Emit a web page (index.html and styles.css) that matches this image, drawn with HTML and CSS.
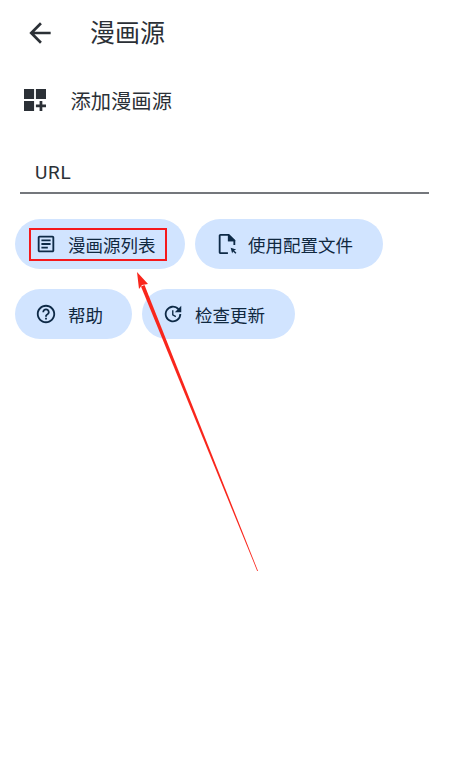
FILE: index.html
```html
<!DOCTYPE html>
<html>
<head>
	<meta charset="utf-8">
	<title>漫画源</title>
	<link rel="stylesheet" href="styles.css">
</head>
<body>
<div class="page">
	<div class="appbar">
		<svg class="back" viewBox="0 0 24 24"><path d="M20 11H7.830l5.590-5.590L12 4l-8 8 8 8 1.410-1.410L7.830 13H20z"/></svg>
		<h1>漫画源</h1>
	</div>
	<div class="add">
		<svg class="add-icon" viewBox="0 0 24 24"><path d="M0 0h11v11H0zM13 0h11v11H13zM0 13h11v11H0zM17 13h3v4h4v3h-4v4h-3v-4h-4v-3h4z"/></svg>
		<span>添加漫画源</span>
	</div>
	<div class="field">URL</div>
	<div class="chips">
		<div class="chip chip-list">
			<svg viewBox="0 0 24 24"><path d="M19 5v14H5V5h14m0-2H5c-1.100 0-2 .9-2 2v14c0 1.100.9 2 2 2h14c1.100 0 2-.9 2-2V5c0-1.100-.9-2-2-2zM7 7h10v2H7zm0 4h10v2H7zm0 4h7v2H7z"/></svg>
			<span>漫画源列表</span>
			<div class="mark"></div>
		</div>
		<div class="chip chip-file">
			<svg viewBox="0 0 24 24">
				<path d="M14 1H5C3.900 1 3 1.900 3 3v18c0 1.100.9 2 2 2h8v-2H5V3h8v6h6v4h2V8z"/>
				<path d="M13 1h1l7 7v1h-8z"/>
				<path d="M16 16l6 2-2.300 1 2.600 2.600-1.100 1.100-2.600-2.600-1 2.300z"/>
			</svg>
			<span>使用配置文件</span>
		</div>
		<div class="chip chip-help">
			<svg viewBox="0 0 24 24"><path d="M11 18h2v-2h-2v2zm1-16C6.480 2 2 6.480 2 12s4.480 10 10 10 10-4.480 10-10S17.520 2 12 2zm0 18c-4.410 0-8-3.590-8-8s3.590-8 8-8 8 3.590 8 8-3.590 8-8 8zm0-14c-2.210 0-4 1.790-4 4h2c0-1.100.9-2 2-2s2 .9 2 2c0 2-3 1.750-3 5h2c0-2.250 3-2.500 3-5 0-2.210-1.790-4-4-4z"/></svg>
			<span>帮助</span>
		</div>
		<div class="chip chip-update">
			<svg viewBox="0 0 24 24"><path d="M11 8v5.400l3.700 2.200.8-1.300-3-1.800V8zM21 10V3l-2.640 2.640A9 9 0 1 0 21 12h-2a7 7 0 1 1-2.060-4.940L14 10z"/></svg>
			<span>检查更新</span>
		</div>
	</div>
	<svg class="arrow" viewBox="0 0 449 758">
		<polygon points="258,571 144.500,285 141,286.500 257.200,571" />
		<polygon points="137,272 148,284 142,285 139,289" />
	</svg>
</div>
</body>
</html>
```

FILE: styles.css
```css
* {
	box-sizing: border-box;
}
html, body {
	margin: 0;
	padding: 0;
	background: #fff;
}
body {
	font-family: "Roboto", "Noto Sans CJK SC", sans-serif;
	color: #2b3036;
}
.page {
	position: relative;
	width: 449px;
	height: 758px;
	overflow: hidden;
}
.appbar {
	display: flex;
	align-items: center;
	height: 66px;
	padding-left: 24px;
}
.back {
	width: 32px;
	height: 32px;
	fill: #2b3036;
}
.appbar h1 {
	margin: 2px 0 0 34px;
	font-size: 25px;
	font-weight: 400;
	line-height: 34px;
}
.add {
	display: flex;
	align-items: center;
	height: 34px;
	margin-top: 17px;
	padding-left: 24px;
	font-size: 20.300px;
}
.add-icon {
	width: 22px;
	height: 22px;
	margin-right: 24.500px;
	fill: #2b3036;
}
.field {
	height: 60px;
	margin: 17px 20px 0;
	padding: 27px 15px 0;
	border-bottom: 2px solid #74777c;
	font-size: 19px;
	line-height: 24px;
	letter-spacing: .7px;
}
.chips {
	display: flex;
	flex-wrap: wrap;
	gap: 20px 10px;
	margin: 25px 0 0 15px;
}
.chip {
	position: relative;
	display: flex;
	align-items: center;
	height: 50px;
	border-radius: 25px;
	background: #d1e4ff;
	color: #10283f;
	font-size: 17.500px;
}
.chip svg {
	width: 22px;
	height: 22px;
	margin-right: 11px;
	fill: #0e2a47;
}
.chip-list {
	width: 170px;
	padding-left: 20px;
}
.chip-file {
	width: 188px;
	padding-left: 21px;
}
.chip-file svg {
	margin-right: 10px;
}
.chip-help {
	width: 117px;
	padding-left: 20px;
}
.chip-update {
	width: 153px;
	padding-left: 20px;
}
.mark {
	position: absolute;
	left: 14px;
	top: 9px;
	width: 138px;
	height: 33px;
	border: 2px solid #f5191c;
}
.arrow {
	position: absolute;
	left: 0;
	top: 0;
	width: 449px;
	height: 758px;
	fill: #f9261c;
	pointer-events: none;
}
```
